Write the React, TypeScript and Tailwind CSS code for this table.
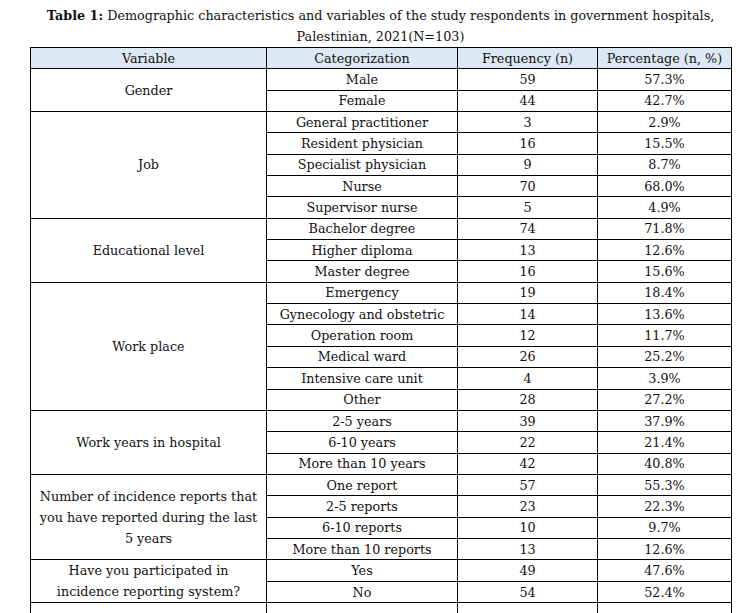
const ROWS: { variable: string; items: [string, number, string][] }[] = [
  {
    variable: "Gender",
    items: [
      ["Male", 59, "57.3%"],
      ["Female", 44, "42.7%"],
    ],
  },
  {
    variable: "Job",
    items: [
      ["General practitioner", 3, "2.9%"],
      ["Resident physician", 16, "15.5%"],
      ["Specialist physician", 9, "8.7%"],
      ["Nurse", 70, "68.0%"],
      ["Supervisor nurse", 5, "4.9%"],
    ],
  },
  {
    variable: "Educational level",
    items: [
      ["Bachelor degree", 74, "71.8%"],
      ["Higher diploma", 13, "12.6%"],
      ["Master degree", 16, "15.6%"],
    ],
  },
  {
    variable: "Work place",
    items: [
      ["Emergency", 19, "18.4%"],
      ["Gynecology and obstetric", 14, "13.6%"],
      ["Operation room", 12, "11.7%"],
      ["Medical ward", 26, "25.2%"],
      ["Intensive care unit", 4, "3.9%"],
      ["Other", 28, "27.2%"],
    ],
  },
  {
    variable: "Work years in hospital",
    items: [
      ["2-5 years", 39, "37.9%"],
      ["6-10 years", 22, "21.4%"],
      ["More than 10 years", 42, "40.8%"],
    ],
  },
  {
    variable: "Number of incidence reports that\nyou have reported during the last\n5 years",
    items: [
      ["One report", 57, "55.3%"],
      ["2-5 reports", 23, "22.3%"],
      ["6-10 reports", 10, "9.7%"],
      ["More than 10 reports", 13, "12.6%"],
    ],
  },
  {
    variable: "Have you participated in\nincidence reporting system?",
    items: [
      ["Yes", 49, "47.6%"],
      ["No", 54, "52.4%"],
    ],
  },
];

const cell = "border border-black text-center align-middle p-0";

export default function App() {
  return (
    <div
      className="h-[613px] w-[739px] overflow-hidden bg-white text-[12.75px] text-[#111]"
      style={{ fontFamily: '"DejaVu Serif", serif' }}
    >
      <div className="ml-[30px] w-[701px] pt-[5px] text-center leading-[21px]">
        <div>
          <span className="font-bold">Table 1:</span> Demographic characteristics and variables of the study
          respondents in government hospitals,
        </div>
        <div>Palestinian, 2021(N=103)</div>
      </div>
      <table className="ml-[30px] w-[701px] table-fixed border-collapse leading-[19px]">
        <colgroup>
          <col className="w-[236px]" />
          <col className="w-[191px]" />
          <col className="w-[140px]" />
          <col className="w-[134px]" />
        </colgroup>
        <thead>
          <tr className="h-[21.35px] bg-[#dce8f4]">
            <th className={`${cell} font-normal`}>Variable</th>
            <th className={`${cell} font-normal`}>Categorization</th>
            <th className={`${cell} font-normal`}>Frequency (n)</th>
            <th className={`${cell} font-normal`}>Percentage (n, %)</th>
          </tr>
        </thead>
        <tbody>
          {ROWS.map((group) =>
            group.items.map(([cat, n, pct], i) => (
              <tr key={group.variable + cat} className="h-[21.35px]">
                {i === 0 && (
                  <td
                    rowSpan={group.items.length}
                    className={`${cell} whitespace-pre-line px-[2px] leading-[21px]`}
                  >
                    {group.variable}
                  </td>
                )}
                <td className={cell}>{cat}</td>
                <td className={cell}>{n}</td>
                <td className={cell}>{pct}</td>
              </tr>
            ))
          )}
          <tr className="h-[21px]">
            <td className="border-x border-black" />
            <td className="border-x border-black" />
            <td className="border-x border-black" />
            <td className="border-x border-black" />
          </tr>
        </tbody>
      </table>
    </div>
  );
}
